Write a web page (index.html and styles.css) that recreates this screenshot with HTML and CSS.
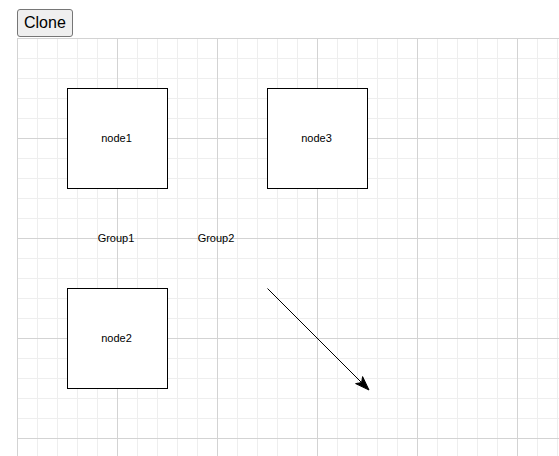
FILE: index.html
```html
<!DOCTYPE html>
<html lang="en">
<head>
    <meta charset="UTF-8">
    <title>Clone</title>
    <link rel="stylesheet" href="styles.css">
</head>
<body>
    <div class="page">
        <button class="btn">Clone</button>
        <div class="graph" id="graphContainer">
            <div class="node" style="left:50px;top:50px;">node1</div>
            <div class="node" style="left:250px;top:50px;">node3</div>
            <div class="node" style="left:50px;top:250px;">node2</div>
            <div class="group" style="left:99px;top:200px;">Group1</div>
            <div class="group" style="left:199px;top:200px;">Group2</div>
            <svg class="edges" width="542" height="418">
                <line x1="250.5" y1="250.5" x2="345" y2="345" stroke="#000" stroke-width="1"/>
                <polygon points="352,352 338.6,345.6 344.6,344.6 345.6,338.6" fill="#000" stroke="#000" stroke-width="1"/>
            </svg>
        </div>
    </div>
</body>
</html>
```

FILE: styles.css
```css
*{
    box-sizing:border-box;
}
html, body{
    overflow:hidden;
}
body{
    margin:0;
    background:#fff;
    font-family:"Liberation Sans", Arial, sans-serif;
}
    .page{
        padding:9px 0 0 17px;
    }
    .btn{
        display:block;
        font-family:"Liberation Sans", Arial, sans-serif;
        font-size:16px;
        color:#000;
        padding:4px 6px;
        height:28px;
        background:#efefef;
        border:1px solid #767676;
        border-radius:3px;
    }
    .graph{
        position:relative;
        margin-top:1px;
        width:542px;
        height:418px;
        background-color:#fff;
        background-image:
            linear-gradient(to right, #d3d3d3 1px, transparent 1px),
            linear-gradient(to bottom, #d3d3d3 1px, transparent 1px),
            linear-gradient(to right, #eeeeee 1px, transparent 1px),
            linear-gradient(to bottom, #eeeeee 1px, transparent 1px);
        background-size:100px 100px, 100px 100px, 20px 20px, 20px 20px;
    }
    .node{
        position:absolute;
        width:101px;
        height:101px;
        padding:0 2px 2px 0;
        border:1px solid #000;
        background:#fff;
        display:flex;
        align-items:center;
        justify-content:center;
        font-size:11px;
        color:#000;
    }
    .group{
        position:absolute;
        transform:translate(-50%, -50%);
        font-size:11px;
        color:#000;
        white-space:nowrap;
    }
    .edges{
        position:absolute;
        left:0;
        top:0;
        overflow:visible;
    }
```
